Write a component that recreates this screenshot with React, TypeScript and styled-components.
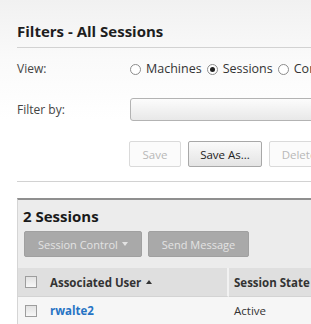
import React from 'react';
import styled, { createGlobalStyle } from 'styled-components';

const GlobalStyle = createGlobalStyle`
  html, body {
    margin: 0;
    padding: 0;
  }
  body {
    font-family: 'Open Sans', 'Noto Sans', sans-serif;
    background: #ffffff;
    color: #333;
  }
`;

const Page = styled.div`
  width: 311px;
  height: 324px;
  overflow: hidden;
  box-sizing: border-box;
  padding: 20px 0 0 17px;
  background: linear-gradient(#f1f1f1 0px, #fafafa 60px, #ffffff 120px);
  white-space: nowrap;
`;

const Title = styled.h1`
  margin: 0;
  font-size: 15px;
  font-weight: 700;
  color: #1e1e1e;
  line-height: 22px;
`;

const Divider = styled.div<{ $top: number }>`
  margin-top: ${(p) => p.$top}px;
  border-top: 1px solid #d2d2d2;
`;

const FormRow = styled.div<{ $top: number }>`
  display: grid;
  grid-template-columns: 113px 1fr;
  align-items: center;
  margin-top: ${(p) => p.$top}px;
`;

const Label = styled.span`
  font-size: 12px;
  line-height: 16px;
  color: #444;
`;

const RadioGroup = styled.div`
  display: flex;
  align-items: center;
  font-size: 12.5px;
  line-height: 16px;
  color: #333;
`;

const RadioOption = styled.label`
  display: flex;
  align-items: center;
  gap: 5px;
  margin-right: 5px;
`;

const RadioDot = styled.span<{ $checked?: boolean }>`
  width: 11px;
  height: 11px;
  border-radius: 50%;
  border: 1px solid #8c8c8c;
  background: #fff;
  box-sizing: border-box;
  display: inline-flex;
  align-items: center;
  justify-content: center;
  &::after {
    content: '';
    width: 5px;
    height: 5px;
    border-radius: 50%;
    background: ${(p) => (p.$checked ? '#222' : 'transparent')};
  }
`;

const SelectBox = styled.div`
  height: 23px;
  width: 240px;
  box-sizing: border-box;
  border: 1px solid #b3b3b3;
  border-radius: 3px;
  background: linear-gradient(#fcfcfc, #e8e8e8);
`;

const ButtonRow = styled.div`
  display: flex;
  gap: 7px;
  margin: 20px 0 0 112px;
`;

const FormButton = styled.button<{ $disabled?: boolean; $width: number }>`
  box-sizing: border-box;
  flex: none;
  height: 26px;
  width: ${(p) => p.$width}px;
  padding: 0 10px;
  font-family: inherit;
  font-size: 11.5px;
  color: ${(p) => (p.$disabled ? '#b8b8b8' : '#222')};
  border: 1px solid ${(p) => (p.$disabled ? '#dadada' : '#a8a8a8')};
  border-radius: 2px;
  background: ${(p) =>
    p.$disabled ? '#fbfbfb' : 'linear-gradient(#fafafa, #e4e4e4)'};
`;

const Panel = styled.section`
  margin-top: 16px;
  border-top: 2px solid #8f8f8f;
  border-left: 1px solid #d5d5d5;
  background: #ececec;
  padding-top: 5px;
`;

const PanelTitle = styled.h2`
  margin: 0 0 0 5px;
  font-size: 15px;
  font-weight: 700;
  color: #1a1a1a;
  line-height: 22px;
`;

const Toolbar = styled.div`
  display: flex;
  gap: 6px;
  margin: 4px 0 0 6px;
`;

const ToolButton = styled.button`
  height: 26px;
  padding: 0 13px;
  font-family: inherit;
  font-size: 11px;
  color: #e3e3e3;
  border: 1px solid #a0a0a0;
  border-radius: 2px;
  background: #a9a9a9;
  display: flex;
  align-items: center;
  gap: 4px;
`;

const Caret = styled.span`
  width: 0;
  height: 0;
  border-left: 3.5px solid transparent;
  border-right: 3.5px solid transparent;
  border-top: 4px solid #e3e3e3;
`;

const Table = styled.div`
  margin-top: 11px;
  display: grid;
  grid-template-columns: 26px 185px 1fr;
`;

const Cell = styled.div<{ $head?: boolean; $divider?: boolean; $pad?: number }>`
  height: ${(p) => (p.$head ? 28 : 27)}px;
  display: flex;
  align-items: center;
  background: ${(p) => (p.$head ? '#dfdfdf' : '#f6f6f6')};
  border-bottom: 1px solid ${(p) => (p.$head ? '#d3d3d3' : '#e2e2e2')};
  border-right: ${(p) => (p.$divider ? '2px solid #f2f2f2' : 'none')};
  padding-left: ${(p) => p.$pad ?? 6}px;
  font-size: 11.5px;
  font-weight: ${(p) => (p.$head ? 700 : 400)};
  color: #333;
`;

const Checkbox = styled.span`
  width: 12px;
  height: 12px;
  box-sizing: border-box;
  border: 1px solid #9d9d9d;
  background: linear-gradient(#e2e2e2, #f7f7f7);
`;

const SortArrow = styled.span`
  display: inline-block;
  margin-left: 5px;
  width: 0;
  height: 0;
  border-left: 3.5px solid transparent;
  border-right: 3.5px solid transparent;
  border-bottom: 4px solid #333;
`;

const UserLink = styled.a`
  color: #2673c4;
  font-weight: 700;
  text-decoration: none;
`;

const App = () => {
  const views = [
    { label: 'Machines', checked: false },
    { label: 'Sessions', checked: true },
    { label: 'Connections', checked: false },
  ];

  return (
    <>
      <GlobalStyle />
      <Page>
        <Title>Filters - All Sessions</Title>
        <Divider $top={5} />

        <FormRow $top={13}>
          <Label>View:</Label>
          <RadioGroup>
            {views.map((v) => (
              <RadioOption key={v.label}>
                <RadioDot $checked={v.checked} />
                {v.label}
              </RadioOption>
            ))}
          </RadioGroup>
        </FormRow>

        <FormRow $top={21}>
          <Label>Filter by:</Label>
          <SelectBox />
        </FormRow>

        <ButtonRow>
          <FormButton $disabled $width={52}>Save</FormButton>
          <FormButton $width={74}>Save As...</FormButton>
          <FormButton $disabled $width={60}>Delete</FormButton>
        </ButtonRow>

        <Divider $top={14} />

        <Panel>
          <PanelTitle>2 Sessions</PanelTitle>
          <Toolbar>
            <ToolButton>
              Session Control <Caret />
            </ToolButton>
            <ToolButton>Send Message</ToolButton>
          </Toolbar>

          <Table>
            <Cell $head $pad={7}>
              <Checkbox />
            </Cell>
            <Cell $head $divider>
              Associated User <SortArrow />
            </Cell>
            <Cell $head $pad={5}>Session State</Cell>

            <Cell $pad={7}>
              <Checkbox />
            </Cell>
            <Cell>
              <UserLink href="#">rwalte2</UserLink>
            </Cell>
            <Cell $pad={5}>Active</Cell>
          </Table>
        </Panel>
      </Page>
    </>
  );
};

export default App;
